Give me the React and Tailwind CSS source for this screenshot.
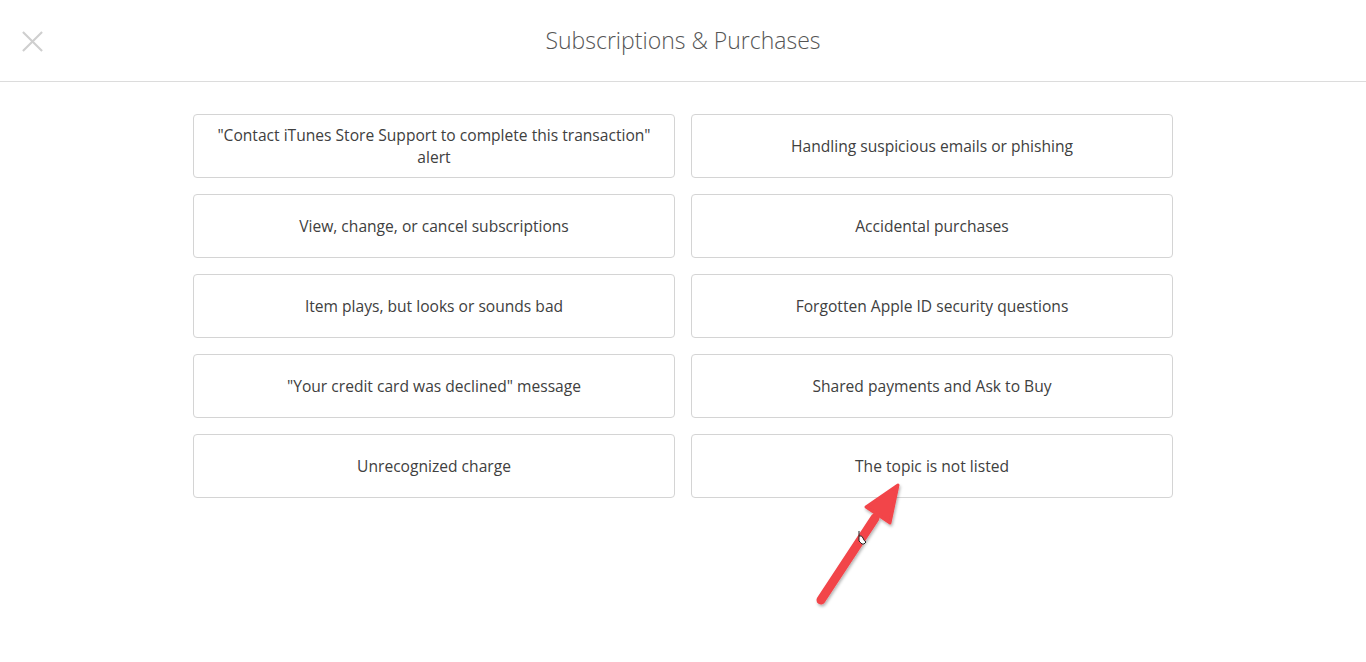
import React from "react";

const topics = [
  ['"Contact iTunes Store Support to complete this transaction" alert', "Handling suspicious emails or phishing"],
  ["View, change, or cancel subscriptions", "Accidental purchases"],
  ["Item plays, but looks or sounds bad", "Forgotten Apple ID security questions"],
  ['"Your credit card was declined" message', "Shared payments and Ask to Buy"],
  ["Unrecognized charge", "The topic is not listed"],
];

const App = () => {
  return (
    <div className="relative min-h-[662px] bg-white text-[#444] font-['Open_Sans',sans-serif]">
      {/* Header */}
      <div className="relative h-[82px] border-b border-[#dcdcdc] flex items-center justify-center">
        <button className="absolute left-[21px] top-[30px] w-[23px] h-[23px] text-[#cfcfcf]">
          <svg viewBox="0 0 24 24" className="w-full h-full" fill="none" stroke="currentColor" strokeWidth="2.2">
            <path d="M2 2 L22 22 M22 2 L2 22" />
          </svg>
        </button>
        <h1 className="text-[23px] font-light text-[#555]">Subscriptions &amp; Purchases</h1>
      </div>

      {/* Topic grid */}
      <div className="w-[980px] mx-auto pt-[32px] grid grid-cols-2 gap-x-[16px] gap-y-[16px]">
        {topics.flat().map((t, i) => (
          <button
            key={i}
            className="h-[64px] border border-[#d4d4d4] rounded-[4px] px-[14px] flex items-center justify-center text-center text-[15.6px] leading-[22px] text-[#404040] bg-white"
          >
            {t}
          </button>
        ))}
      </div>

      {/* Annotation arrow */}
      <svg className="absolute left-[800px] top-[470px] pointer-events-none" width="120" height="150" viewBox="800 470 120 150">
        <defs>
          <filter id="sh" x="-20%" y="-20%" width="140%" height="140%">
            <feDropShadow dx="1" dy="2" stdDeviation="1.5" floodColor="#000" floodOpacity="0.3" />
          </filter>
        </defs>
        <g filter="url(#sh)" fill="#f2444a">
          <path d="M821 600 L875 518" stroke="#f2444a" strokeWidth="9" strokeLinecap="round" />
          <path d="M898 485 L890 523 L866 507 Z" stroke="#f2444a" strokeWidth="3" strokeLinejoin="round" />
        </g>
      </svg>

      {/* Cursor */}
      <svg className="absolute left-[857px] top-[530px] pointer-events-none" width="12" height="16" viewBox="0 0 12 16">
        <path d="M2 1 L2 11 M2 6 Q5 5 6 8 Q7 11 9 12 Q7 15 5 14 Q3 12 2 11" fill="white" stroke="#222" strokeWidth="1" />
      </svg>
    </div>
  );
};

export default App;
